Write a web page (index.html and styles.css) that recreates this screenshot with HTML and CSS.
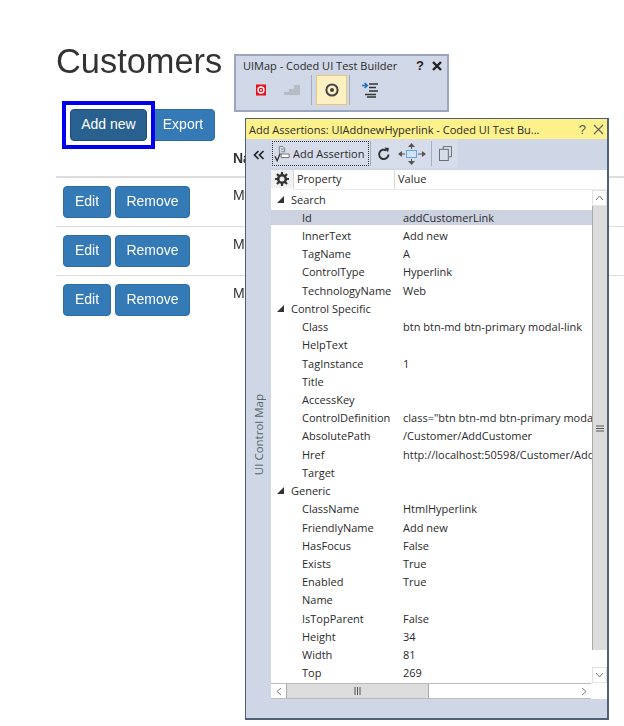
FILE: index.html
```html
<!DOCTYPE html>
<html lang="en">
<head>
    <meta charset="UTF-8">
    <title>Customers</title>
    <link rel="stylesheet" href="styles.css">
</head>
<body>

    <!-- Web page under test -->
    <div class="page">
        <h1>Customers</h1>
        <div class="page-actions">
            <a class="btn btn-active">Add new</a>
            <a class="btn btn-export">Export</a>
        </div>
        <div class="customer-row customer-head">
            <div></div>
            <div class="name-head">Name</div>
        </div>
        <div class="customer-row">
            <div class="row-buttons"><a class="btn btn-edit">Edit</a><a class="btn btn-remove">Remove</a></div>
            <div class="name-cell">MyCustomer</div>
        </div>
        <div class="customer-row">
            <div class="row-buttons"><a class="btn btn-edit">Edit</a><a class="btn btn-remove">Remove</a></div>
            <div class="name-cell">MyCustomer</div>
        </div>
        <div class="customer-row">
            <div class="row-buttons"><a class="btn btn-edit">Edit</a><a class="btn btn-remove">Remove</a></div>
            <div class="name-cell">MyCustomer</div>
        </div>
    </div>

    <!-- Coded UI floating toolbar -->
    <div class="uimap">
        <div class="uimap-title">
            <span>UIMap - Coded UI Test Builder</span>
            <span class="uimap-help">?</span>
            <svg class="uimap-close" width="10" height="10" viewBox="0 0 10 10"><path d="M1 1l8 8M9 1l-8 8" stroke="#222" stroke-width="2.4"/></svg>
        </div>
        <div class="uimap-tools">
            <div class="uimap-tool">
                <svg width="12" height="12" viewBox="0 0 12 12"><rect x="1" y="0.5" width="10" height="11" fill="#e8101c"/><circle cx="6" cy="6" r="3" fill="none" stroke="#fff" stroke-width="1.4"/><circle cx="6" cy="6" r="1" fill="#fff"/></svg>
            </div>
            <div class="uimap-tool">
                <svg width="18" height="12" viewBox="0 0 18 12"><path d="M1 11V8h5V5h5V1h6v10z" fill="#b6bbc4"/></svg>
            </div>
            <div class="uimap-sep"></div>
            <div class="uimap-tool uimap-tool-on">
                <svg width="16" height="16" viewBox="0 0 16 16"><circle cx="8" cy="8" r="5.6" fill="none" stroke="#444" stroke-width="2"/><circle cx="8" cy="8" r="2" fill="#444"/></svg>
            </div>
            <div class="uimap-sep"></div>
            <div class="uimap-tool">
                <svg width="18" height="16" viewBox="0 0 18 16"><path d="M1 3.500h4M3.600 1l2.600 2.500L3.600 6" fill="none" stroke="#1a6fc0" stroke-width="1.700"/><path d="M8 2h9M8 5.500h7M8 9h9M4 12.500h11M6 15h9" stroke="#333" stroke-width="1.500"/></svg>
            </div>
        </div>
    </div>

    <!-- Add Assertions window -->
    <div class="assert-win">
        <div class="assert-title">
            <span class="assert-title-text">Add Assertions: UIAddnewHyperlink - Coded UI Test Bu...</span>
            <span class="assert-help">?</span>
            <svg width="11" height="11" viewBox="0 0 11 11"><path d="M1 1l9 9M10 1l-9 9" stroke="#666" stroke-width="1.3"/></svg>
        </div>
        <div class="assert-tools">
            <div class="collapse-btn">
                <svg width="12" height="10" viewBox="0 0 12 10"><path d="M5.500 1L1.500 5l4 4M10.500 1l-4 4 4 4" fill="none" stroke="#222" stroke-width="1.700"/></svg>
            </div>
            <div class="tool-strip">
                <div class="add-assertion">
                    <svg width="16" height="18" viewBox="0 0 18 19"><path d="M6 1h4l2 2v4M6 1v8M8 4h3M8 7h4" fill="none" stroke="#777" stroke-width="1"/><path d="M8 9.500h9v4H8z" fill="#fff" stroke="#666"/><path d="M1 12l2.500 5L7 9" fill="none" stroke="#333" stroke-width="1.500"/></svg>
                    <span>Add Assertion</span>
                </div>
                <div class="tool-sep"></div>
                <svg class="refresh-icon" width="14" height="14" viewBox="0 0 14 14"><path d="M11.500 7.500a4.700 4.700 0 1 1-2-4" fill="none" stroke="#333" stroke-width="2"/><path d="M7.500 0.500l4.500 0.500-1 4.500z" fill="#333"/></svg>
                <svg class="move-icon" width="30" height="24" viewBox="0 0 30 24"><rect x="9.500" y="8.500" width="10" height="7" fill="#cfe2f6" stroke="#6aa5dc"/><path d="M14.500 1l3.500 4h-7zM14.500 23l3.500-4h-7zM1 12l4-3v6zM29 12l-4-3v6z" fill="#555"/><path d="M14.500 4v3M14.500 17v3M4 12h4M21 12h5" stroke="#555"/></svg>
                <div class="tool-sep"></div>
                <svg class="copy-icon" width="13" height="15" viewBox="0 0 14 16"><path d="M4.500 3.500V0.500h9v11h-3" fill="none" stroke="#666"/><rect x="0.500" y="3.500" width="9.500" height="12" fill="none" stroke="#666"/></svg>
            </div>
        </div>
        <div class="assert-body">
            <div class="side-tab"><span>UI Control Map</span></div>
            <div class="grid-panel">
                <div class="grid-head">
                    <div class="gear-cell">
                        <svg width="14" height="14" viewBox="0 0 14 14"><circle cx="7" cy="7" r="3.800" fill="none" stroke="#333" stroke-width="2.600"/><path d="M7 0v3M7 11v3M0 7h3M11 7h3M2 2l2 2M10 10l2 2M12 2l-2 2M4 10l-2 2" stroke="#333" stroke-width="2.200"/></svg>
                    </div>
                    <div class="head-property">Property</div>
                    <div class="head-value">Value</div>
                </div>
                <div class="grid-main">
                    <div class="prop-list">
                        <div class="prop-group"><i class="arrow"></i>Search</div>
                        <div class="prop-row prop-selected"><span>Id</span><span>addCustomerLink</span></div>
                        <div class="prop-row"><span>InnerText</span><span>Add new</span></div>
                        <div class="prop-row"><span>TagName</span><span>A</span></div>
                        <div class="prop-row"><span>ControlType</span><span>Hyperlink</span></div>
                        <div class="prop-row"><span>TechnologyName</span><span>Web</span></div>
                        <div class="prop-group"><i class="arrow"></i>Control Specific</div>
                        <div class="prop-row"><span>Class</span><span>btn btn-md btn-primary modal-link</span></div>
                        <div class="prop-row"><span>HelpText</span><span></span></div>
                        <div class="prop-row"><span>TagInstance</span><span>1</span></div>
                        <div class="prop-row"><span>Title</span><span></span></div>
                        <div class="prop-row"><span>AccessKey</span><span></span></div>
                        <div class="prop-row"><span>ControlDefinition</span><span>class="btn btn-md btn-primary modal-link"</span></div>
                        <div class="prop-row"><span>AbsolutePath</span><span>/Customer/AddCustomer</span></div>
                        <div class="prop-row"><span>Href</span><span>http://localhost:50598/Customer/AddCustomer</span></div>
                        <div class="prop-row"><span>Target</span><span></span></div>
                        <div class="prop-group"><i class="arrow"></i>Generic</div>
                        <div class="prop-row"><span>ClassName</span><span>HtmlHyperlink</span></div>
                        <div class="prop-row"><span>FriendlyName</span><span>Add new</span></div>
                        <div class="prop-row"><span>HasFocus</span><span>False</span></div>
                        <div class="prop-row"><span>Exists</span><span>True</span></div>
                        <div class="prop-row"><span>Enabled</span><span>True</span></div>
                        <div class="prop-row"><span>Name</span><span></span></div>
                        <div class="prop-row"><span>IsTopParent</span><span>False</span></div>
                        <div class="prop-row"><span>Height</span><span>34</span></div>
                        <div class="prop-row"><span>Width</span><span>81</span></div>
                        <div class="prop-row"><span>Top</span><span>269</span></div>
                    </div>
                    <div class="vscroll">
                        <div class="scroll-btn">
                            <svg width="9" height="6" viewBox="0 0 9 6"><path d="M1 5l3.500-4 3.500 4" fill="none" stroke="#777"/></svg>
                        </div>
                        <div class="vscroll-track">
                            <div class="vscroll-thumb">
                                <svg width="8" height="7" viewBox="0 0 8 7"><path d="M0 1h8M0 3.500h8M0 6h8" stroke="#555"/></svg>
                            </div>
                        </div>
                        <div class="scroll-btn">
                            <svg width="9" height="6" viewBox="0 0 9 6"><path d="M1 1l3.500 4 3.500-4" fill="none" stroke="#777"/></svg>
                        </div>
                    </div>
                </div>
                <div class="hscroll">
                    <div class="hscroll-bar">
                        <div class="scroll-btn hscroll-btn">
                            <svg width="6" height="9" viewBox="0 0 6 9"><path d="M5 1L1 4.500 5 8" fill="none" stroke="#777"/></svg>
                        </div>
                        <div class="hscroll-thumb">
                            <svg width="7" height="8" viewBox="0 0 7 8"><path d="M1 0v8M3.500 0v8M6 0v8" stroke="#555"/></svg>
                        </div>
                        <div class="hscroll-track"></div>
                        <div class="scroll-btn hscroll-btn">
                            <svg width="6" height="9" viewBox="0 0 6 9"><path d="M1 1l4 3.500L1 8" fill="none" stroke="#777"/></svg>
                        </div>
                    </div>
                    <div class="scroll-corner"></div>
                </div>
            </div>
        </div>
        <div class="assert-foot"></div>
    </div>

</body>
</html>
```

FILE: styles.css
```css
body {
    margin: 0;
    height: 726px;
    overflow: hidden;
    position: relative;
    background-color: #fff;
    font-family: "Liberation Sans", Arial, sans-serif;
    font-size: 14px;
    color: #333;
    filter: blur(0.35px);
}

/* page behind the windows */
.page {
    padding: 39px 0 0 56px;
}
h1 {
    margin: 0;
    height: 44px;
    font-size: 34.4px;
    line-height: 44px;
    font-weight: 400;
}
.page-actions {
    display: flex;
    gap: 4px;
    margin: 26px 0 0 14px;
}
.btn {
    display: flex;
    align-items: center;
    justify-content: center;
    box-sizing: border-box;
    height: 32px;
    padding: 0 0 2px;
    background-color: #337ab7;
    border: 1px solid #2e6da4;
    border-radius: 4px;
    color: #fff;
    white-space: nowrap;
}
.btn-active {
    position: relative;
    z-index: 1;
    width: 77px;
    background-color: #286090;
    border-color: #204d74;
}
/* blue highlight box the test builder draws round the control */
.btn-active::after {
    content: "";
    position: absolute;
    inset: -9px;
    border: 4px solid #0000f0;
    box-shadow: inset 0 0 0 4px #fff;
}
.btn-export {
    width: 64px;
}
.customer-row {
    display: grid;
    grid-template-columns: 177px 1fr;
    height: 48px;
    border-top: 1px solid #ddd;
}
.customer-head {
    height: 35px;
    border-top: none;
    border-bottom: 1px solid #ddd;
}
.name-head {
    font-weight: 700;
    padding-top: 9px;
}
.row-buttons {
    display: flex;
    gap: 4px;
    padding: 8px 0 0 7px;
}
.btn-edit {
    width: 48px;
}
.btn-remove {
    width: 75px;
}
.name-cell {
    padding-top: 9px;
}

/* floating windows */
.uimap, .assert-win {
    position: absolute;
    box-sizing: border-box;
    font-family: "Open Sans", "Noto Sans", sans-serif;
    font-size: 11px;
    color: #2a2a2a;
}
.uimap {
    left: 234px;
    top: 54px;
    width: 215px;
    height: 58px;
    background-color: #d0d7e6;
    border: 2px solid #9aa6bb;
}
.uimap-title {
    display: flex;
    align-items: center;
    height: 19px;
    padding-left: 7px;
}
.uimap-help {
    margin-left: auto;
    font-family: "Liberation Sans", sans-serif;
    font-weight: 700;
    font-size: 13px;
    color: #222;
}
.uimap-close {
    margin: 0 5px 0 8px;
}
.uimap-tools {
    display: flex;
    align-items: center;
    height: 30px;
    padding-left: 9px;
}
.uimap-tool {
    display: flex;
    align-items: center;
    justify-content: center;
    width: 31px;
    height: 30px;
}
.uimap-tool-on {
    margin-right: -2px;
    background-color: #fdf0c2;
    border: 1px solid #e6c878;
    box-sizing: border-box;
}
.uimap-sep {
    width: 1px;
    height: 30px;
    margin: 0 4px;
    background-color: #a3adbf;
}
.assert-win {
    left: 245px;
    top: 118px;
    width: 364px;
    height: 602px;
    display: flex;
    flex-direction: column;
    background-color: #cfd6e5;
    border: 1px solid #4e6075;
    border-width: 1px 2px 2px 1px;
}
.assert-title {
    display: flex;
    align-items: center;
    height: 20px;
    flex: none;
    padding: 0 3px;
    background-color: #fdf18c;
}
.assert-title-text {
    flex: 1;
    white-space: nowrap;
}
.assert-help {
    margin-right: 7px;
    font-family: "Liberation Sans", sans-serif;
    font-size: 13px;
    color: #555;
}
.assert-tools {
    display: flex;
    height: 31px;
    flex: none;
}
.collapse-btn {
    display: flex;
    align-items: center;
    justify-content: center;
    width: 25px;
}
.tool-strip {
    display: flex;
    align-items: center;
    width: 187px;
    height: 29px;
    background-color: #d7dcea;
    border-radius: 0 0 3px 0;
}
.add-assertion {
    display: flex;
    align-items: center;
    gap: 3px;
    box-sizing: border-box;
    width: 97px;
    height: 25px;
    margin-left: 1px;
    padding-left: 1px;
    border: 1px dotted #333;
    white-space: nowrap;
}
.tool-sep {
    width: 1px;
    height: 25px;
    margin: 0 1px;
    background-color: #a3adbf;
}
.refresh-icon {
    margin-left: 5px;
}
.move-icon {
    margin: 0 3px 0 6px;
}
.copy-icon {
    margin-left: 6px;
}
.assert-body {
    display: flex;
    height: 529px;
    flex: none;
}
.side-tab {
    display: flex;
    align-items: center;
    justify-content: center;
    width: 25px;
    flex: none;
    font-size: 11.5px;
    color: #566;
}
.side-tab span {
    writing-mode: vertical-rl;
    transform: rotate(180deg);
}
.grid-panel {
    flex: 1;
    min-width: 0;
    display: flex;
    flex-direction: column;
    background-color: #fff;
}
.grid-head {
    display: grid;
    grid-template-columns: 22px 101px 1fr;
    height: 20px;
    flex: none;
    background-color: #fff;
    line-height: 18px;
}
.gear-cell {
    display: flex;
    align-items: center;
    justify-content: center;
    height: 18px;
    background-color: #f1f1f1;
}
.head-property, .head-value {
    padding-left: 3px;
    border-left: 1px solid #d8d8d8;
    border-bottom: 1px solid #ececec;
}
.grid-main {
    display: flex;
    flex: 1;
    min-height: 0;
}
.prop-list {
    flex: 1;
    min-width: 0;
    overflow: hidden;
}
.prop-group, .prop-row {
    display: flex;
    align-items: center;
    height: 18.23px;
    white-space: nowrap;
}
.prop-group {
    padding-left: 6px;
}
.arrow {
    width: 0;
    height: 0;
    margin-right: 7px;
    border-style: solid;
    border-width: 0 0 7px 7px;
    border-color: transparent transparent #333 transparent;
}
.prop-row {
    padding-left: 31px;
}
.prop-row span:first-child {
    width: 101px;
    flex: none;
}
.prop-selected {
    background-image: linear-gradient(#cdd2e0, #cdd2e0);
    background-size: 100% 15px;
    background-position: 0 2px;
    background-repeat: no-repeat;
}

/* scrollbars */
.vscroll {
    display: flex;
    flex-direction: column;
    width: 15px;
    flex: none;
}
.scroll-btn {
    display: flex;
    align-items: center;
    justify-content: center;
    box-sizing: border-box;
    height: 16px;
    flex: none;
    background-color: #fff;
    border: 1px solid #e2e2e2;
}
.vscroll-track {
    flex: 1;
}
.vscroll-thumb {
    display: flex;
    align-items: center;
    justify-content: center;
    height: 444px;
    background-color: #dcdcdc;
    border-left: 1px solid #a9a9a9;
    box-sizing: border-box;
}
.hscroll {
    display: flex;
    height: 16px;
    flex: none;
}
.hscroll-bar {
    flex: 1;
    display: flex;
    border-top: 1px solid #bbb;
    border-bottom: 1px solid #bbb;
    box-sizing: border-box;
}
.hscroll-btn {
    width: 15px;
    height: 100%;
    border: none;
}
.hscroll-thumb {
    display: flex;
    align-items: center;
    justify-content: center;
    width: 143px;
    background-color: #dcdcdc;
    border-left: 1px solid #a9a9a9;
    border-right: 1px solid #a9a9a9;
    box-sizing: border-box;
}
.hscroll-track {
    flex: 1;
}
.scroll-corner {
    width: 16px;
    flex: none;
}
.assert-foot {
    flex: 1;
}
```
